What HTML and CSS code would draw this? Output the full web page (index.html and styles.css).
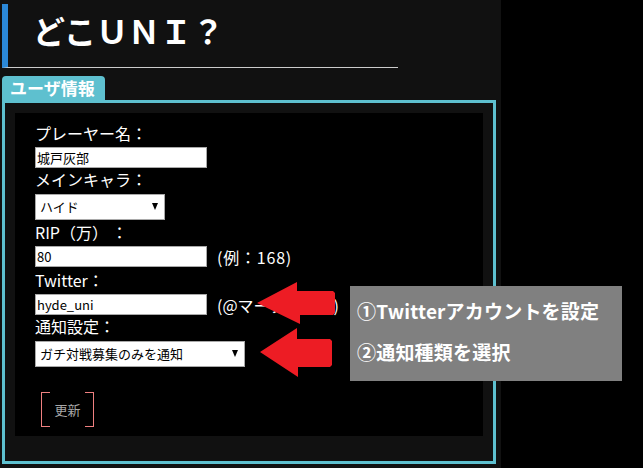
FILE: index.html
```html
<!DOCTYPE html>
<html lang="ja">
<head>
<meta charset="utf-8">
<title>どこＵＮＩ？</title>
<link rel="stylesheet" href="styles.css">
</head>
<body>
<div class="page">
  <header class="site-header">
    <h1 class="site-title">どこＵＮＩ？</h1>
  </header>
  <section class="panel">
    <div class="panel-tab">ユーザ情報</div>
    <div class="panel-box">
      <form class="form">
        <label class="field-label">プレーヤー名：</label>
        <input class="text-input" type="text" value="城戸灰部">
        <label class="field-label">メインキャラ：</label>
        <div class="select-wrap select-short">
          <select class="select"><option>ハイド</option></select>
        </div>
        <label class="field-label spaced">RIP（万）&nbsp;：</label>
        <div class="field-row">
          <input class="text-input" type="text" value="80">
          <span class="hint">(例：168)</span>
        </div>
        <label class="field-label spaced">Twitter：</label>
        <div class="field-row">
          <input class="text-input" type="text" value="hyde_uni">
          <span class="hint hint-tight">(@マークは不要)</span>
        </div>
        <label class="field-label">通知設定：</label>
        <div class="select-wrap select-long">
          <select class="select"><option>ガチ対戦募集のみを通知</option></select>
        </div>
        <button class="update-btn" type="button">更新</button>
      </form>
    </div>
  </section>
</div>

<div class="callout">
  <p class="callout-line">①Twitterアカウントを設定</p>
  <p class="callout-line">②通知種類を選択</p>
</div>

<svg class="arrows" width="100" height="110" viewBox="250 275 100 110" aria-hidden="true">
  <polygon fill="#ed1c24" points="257,303 297,282 297,291 333,291 335,293 335,313 333,315 300,315 300,324"/>
  <polygon fill="#ed1c24" points="260,352 297,328 297,339 330,339 332,341 332,365 330,367 298,367 298,377"/>
</svg>
</body>
</html>
```

FILE: styles.css
```css
* {
  box-sizing: border-box;
}

html,
body {
  margin: 0;
  padding: 0;
  background: #000;
}

body {
  position: relative;
  width: 643px;
  height: 468px;
  overflow: hidden;
  font-family: "Noto Sans CJK JP", "Noto Sans", sans-serif;
  color: #fff;
}

.page {
  width: 501px;
  height: 468px;
  background: #111;
  overflow: hidden;
}

/* header */
.site-header {
  margin: 4px 0 0 2px;
  width: 396px;
  height: 64px;
  border-left: 6px solid #2b88d8;
  border-bottom: 1px solid #cccccc;
  padding: 2px 0 12px 25px;
}

.site-title {
  margin: 0;
  font-size: 32px;
  line-height: 49px;
  font-weight: 700;
  color: #fff;
}

/* panel */
.panel {
  margin: 8px 0 0 2px;
  width: 494px;
}

.panel-tab {
  width: 103px;
  height: 24px;
  padding-left: 8px;
  background: #5ec0cf;
  border-radius: 4px 4px 0 0;
  font-size: 17px;
  font-weight: 700;
  line-height: 24px;
  color: #fff;
}

.panel-box {
  border: 3px solid #5ec0cf;
  padding: 10px 10px 25px 10px;
}

.form {
  display: flex;
  flex-direction: column;
  align-items: flex-start;
  background: #000;
  padding: 9px 20px 9px 20px;
  margin: 0;
}

.field-label {
  display: block;
  height: 25px;
  font-size: 16px;
  line-height: 22px;
  color: #fff;
  white-space: nowrap;
}

.field-label.spaced {
  margin-top: 2px;
}

.text-input {
  width: 172px;
  height: 21px;
  margin: 0;
  padding: 0 1px;
  border: 1px solid #a9a9a9;
  background: #fff;
  color: #000;
  font-family: "Noto Sans CJK JP", "Noto Sans", sans-serif;
  font-size: 13px;
  line-height: 19px;
  outline: none;
}

.field-row {
  display: flex;
  align-items: center;
  gap: 10px;
  height: 21px;
}

.hint {
  font-size: 16px;
  letter-spacing: 0.8px;
  color: #fff;
  white-space: nowrap;
}

.hint-tight {
  letter-spacing: 0;
}

.select-wrap {
  position: relative;
  height: 26px;
}

.select-short {
  width: 130px;
}

.select-long {
  width: 210px;
}

.select-wrap::after {
  content: "";
  position: absolute;
  right: 7px;
  top: 10px;
  width: 0;
  height: 0;
  border-left: 3.5px solid transparent;
  border-right: 3.5px solid transparent;
  border-top: 7px solid #000;
  pointer-events: none;
}

.select {
  -webkit-appearance: none;
  appearance: none;
  width: 100%;
  height: 26px;
  margin: 0;
  padding: 0 0 0 4px;
  border: 1px solid #a9a9a9;
  border-radius: 0;
  background: #fff;
  color: #000;
  font-family: "Noto Sans CJK JP", "Noto Sans", sans-serif;
  font-size: 13px;
  line-height: 24px;
  outline: none;
}

.update-btn {
  margin: 26px 0 0 6px;
  width: 53px;
  height: 35px;
  padding: 0;
  border: none;
  border-left: 1px solid #ef8080;
  border-right: 1px solid #ef8080;
  background-color: transparent;
  background-image:
    linear-gradient(#ef8080, #ef8080),
    linear-gradient(#ef8080, #ef8080),
    linear-gradient(#ef8080, #ef8080),
    linear-gradient(#ef8080, #ef8080);
  background-size: 8px 1px;
  background-repeat: no-repeat;
  background-position: left top, right top, left bottom, right bottom;
  color: #a8a8a8;
  font-family: "Noto Sans CJK JP", "Noto Sans", sans-serif;
  font-size: 13px;
  line-height: 33px;
  cursor: pointer;
}

/* overlays */
.callout {
  position: absolute;
  left: 350px;
  top: 286px;
  width: 272px;
  height: 95px;
  padding: 4px 0 0 7px;
  background: #808080;
}

.callout-line {
  margin: 0;
  font-size: 19px;
  font-weight: 700;
  line-height: 41px;
  letter-spacing: 0.2px;
  color: #fff;
  white-space: nowrap;
}

.arrows {
  position: absolute;
  left: 250px;
  top: 275px;
}
```
